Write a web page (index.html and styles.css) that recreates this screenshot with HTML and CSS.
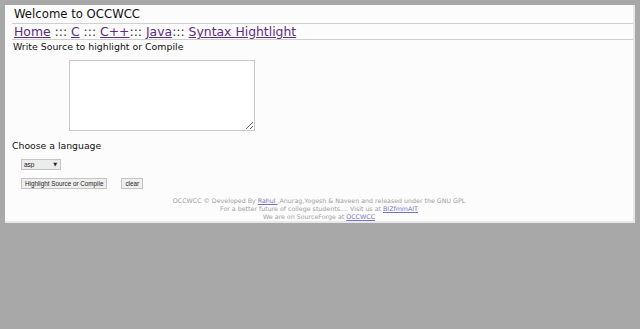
FILE: index.html
```html
<!DOCTYPE html>
<html>
<head>
	<title>OCCWCC</title>
	<link rel="stylesheet" href="styles.css">
</head>
<body>
	<div class="page">
		<div class="title">Welcome to OCCWCC</div>
		<div class="nav">
			<a href="#">Home</a> ::: <a href="#">C</a> ::: <a href="#">C++</a>::: <a href="#">Java</a>::: <a href="#">Syntax Hightlight</a>
		</div>
		<div class="intro">Write Source to highlight or Compile</div>
		<div class="source">
			<textarea class="code"></textarea>
		</div>
		<div class="choose">Choose a language</div>
		<div class="lang">
			<span class="select_wrap">
				<select class="lang_select">
					<option>asp</option>
				</select>
				<span class="arrow">&#9660;</span>
			</span>
		</div>
		<div class="actions">
			<button class="btn">Highlight Source or Compile</button>
			<button class="btn">clear</button>
		</div>
		<div class="footer">
			<div>OCCWCC &copy; Developed By <a href="#">Rahul </a>,Anurag,Yogesh &amp; Naveen and released under the GNU GPL</div>
			<div>For a better future of college students.... Visit us at <a href="#">BIZfmmAIT</a></div>
			<div>We are on SourceForge at <a href="#">OCCWCC</a></div>
		</div>
	</div>
</body>
</html>
```

FILE: styles.css
```css
html, body{
	margin: 0;
	padding: 0;
}
body{
	background-color: #a8a8a8;
	font-family: "DejaVu Sans", Verdana, sans-serif;
	color: #111;
	padding: 5px 5px 0 5px;
	height: 329px;
	box-sizing: border-box;
}
.page{
	background-color: #fcfcfc;
	border-right: 2px solid #e8e8e8;
	border-bottom: 2px solid #e8e8e8;
	padding: 0 0 0 7px;
}
.title{
	font-size: 11.7px;
	line-height: 17px;
	padding: 1px 0 0 2px;
	border-bottom: 1px solid #cfcfcf;
}
.nav{
	font-size: 12.4px;
	line-height: 15px;
	padding: 0 0 0 2px;
	border-bottom: 1px solid #cfcfcf;
	color: #333;
}
.nav a{
	color: #5a2d82;
}
.intro{
	font-size: 9.4px;
	line-height: 14px;
	padding-left: 1px;
}
.source{
	padding: 6px 0 0 57px;
}
.code{
	display: block;
	width: 186px;
	height: 71px;
	box-sizing: border-box;
	border: 1px solid #c8c8c8;
	background: #fff;
	margin: 0;
}
.choose{
	font-size: 9.3px;
	line-height: 12px;
	margin-top: 9px;
}
.lang{
	display: flex;
	padding: 7px 0 0 9px;
	height: 11px;
}
.select_wrap{
	position: relative;
	display: block;
	width: 40px;
	height: 11px;
}
.lang_select{
	appearance: none;
	display: block;
	font-family: "Liberation Sans", Arial, sans-serif;
	font-size: 6.5px;
	width: 40px;
	height: 11px;
	padding: 0 0 0 2px;
	margin: 0;
	border: 1px solid #c4c4c4;
	border-radius: 0;
	background: #ececec;
	color: #222;
}
.arrow{
	position: absolute;
	right: 4px;
	top: 2px;
	font-size: 5px;
	line-height: 7px;
	color: #222;
}
.actions{
	display: flex;
	gap: 14px;
	padding: 8px 0 0 9px;
}
.btn{
	font-family: "Liberation Sans", Arial, sans-serif;
	font-size: 6.3px;
	height: 11px;
	line-height: 9px;
	padding: 0 3px;
	margin: 0;
	border: 1px solid #c4c4c4;
	border-radius: 0;
	background: #efefef;
	color: #222;
}
.footer{
	text-align: center;
	font-size: 6.3px;
	line-height: 8px;
	color: #a0a0a0;
	margin-top: 8px;
	padding-right: 7px;
}
.footer a{
	color: #7474c4;
}
```
